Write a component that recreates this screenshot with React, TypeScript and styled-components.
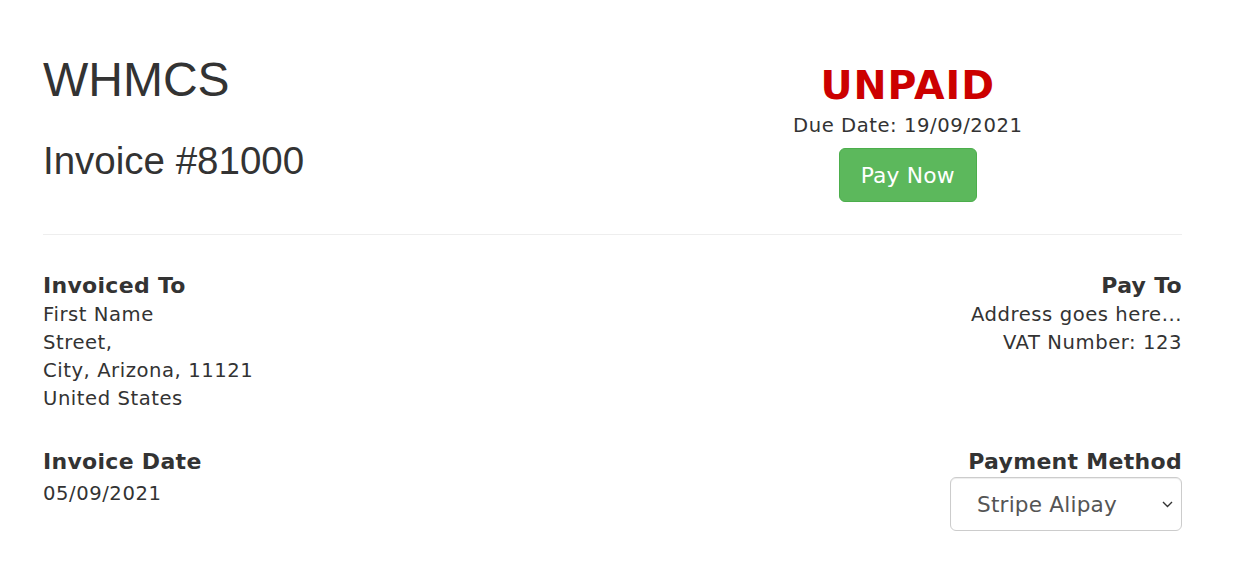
import styled, { createGlobalStyle } from 'styled-components';

const GlobalStyle = createGlobalStyle`
  html, body {
    margin: 0;
    padding: 0;
    background: #ffffff;
  }

  body {
    font-family: 'DejaVu Sans', Verdana, sans-serif;
    font-size: 19.6px;
    line-height: 28px;
    letter-spacing: 0.55px;
    color: #333333;
  }
`;

const Page = styled.div`
  padding: 54px 75px 0 43px;
`;

const Header = styled.header`
  display: grid;
  grid-template-columns: 1fr 1fr;
  column-gap: 42px;
  padding-bottom: 32px;
  border-bottom: 1px solid #eeeeee;
`;

const Brand = styled.h1`
  margin: 0;
  font-family: 'Liberation Sans', Arial, sans-serif;
  font-weight: 400;
  font-size: 48px;
  line-height: 52.8px;
  letter-spacing: 0;
`;

const InvoiceTitle = styled.h2`
  margin: 32px 0 0;
  font-family: 'Liberation Sans', Arial, sans-serif;
  font-weight: 400;
  font-size: 38.5px;
  line-height: 44px;
  letter-spacing: 0;
`;

const StatusColumn = styled.div`
  display: flex;
  flex-direction: column;
  align-items: center;
  padding-top: 9px;
`;

const Status = styled.div<{ $tone: 'unpaid' | 'paid' }>`
  font-weight: 700;
  font-size: 39.5px;
  line-height: 44px;
  letter-spacing: 1px;
  color: ${({ $tone }) => ($tone === 'unpaid' ? '#cc0000' : '#779500')};
`;

const DueDate = styled.div`
  margin-top: 5px;
`;

const PayButton = styled.button`
  margin-top: 8px;
  height: 54px;
  padding: 0 21px;
  font-family: 'DejaVu Sans', Verdana, sans-serif;
  font-size: 21.8px;
  letter-spacing: 0.2px;
  color: #ffffff;
  background: #5cb85c;
  border: 1px solid #4cae4c;
  border-radius: 6px;
  cursor: pointer;
`;

const DetailsRow = styled.section<{ $top: number }>`
  display: grid;
  grid-template-columns: 1fr 1fr;
  column-gap: 42px;
  margin-top: ${({ $top }) => $top}px;
`;

const Block = styled.div<{ $align?: 'left' | 'right' }>`
  display: flex;
  flex-direction: column;
  align-items: ${({ $align }) => ($align === 'right' ? 'flex-end' : 'flex-start')};
  text-align: ${({ $align }) => $align ?? 'left'};
`;

const Label = styled.strong`
  display: block;
  font-size: 22px;
  line-height: 30px;
  letter-spacing: 0.3px;
`;

const Line = styled.span<{ $gap?: number }>`
  display: block;
  margin-top: ${({ $gap }) => $gap ?? 0}px;
`;

const SelectWrap = styled.div`
  position: relative;
`;

const MethodSelect = styled.select`
  appearance: none;
  width: 232px;
  height: 54px;
  padding: 0 36px 0 26px;
  font-family: 'DejaVu Sans', Verdana, sans-serif;
  font-size: 21.6px;
  letter-spacing: 0.2px;
  color: #555555;
  background: #ffffff;
  border: 1px solid #cccccc;
  border-radius: 6px;
  box-shadow: inset 0 1px 1px rgba(0, 0, 0, 0.075);
`;

const Chevron = styled.svg`
  position: absolute;
  right: 9px;
  top: 24px;
  width: 11px;
  height: 7px;
  pointer-events: none;
`;

export default function App() {
  return (
    <>
      <GlobalStyle />
      <Page>
        <Header>
          <div>
            <Brand>WHMCS</Brand>
            <InvoiceTitle>Invoice #81000</InvoiceTitle>
          </div>
          <StatusColumn>
            <Status $tone="unpaid">UNPAID</Status>
            <DueDate>Due Date: 19/09/2021</DueDate>
            <PayButton type="button">Pay Now</PayButton>
          </StatusColumn>
        </Header>

        <DetailsRow $top={36}>
          <Block>
            <Label>Invoiced To</Label>
            <Line>First Name</Line>
            <Line>Street,</Line>
            <Line>City, Arizona, 11121</Line>
            <Line>United States</Line>
          </Block>
          <Block $align="right">
            <Label>Pay To</Label>
            <Line>Address goes here...</Line>
            <Line>VAT Number: 123</Line>
          </Block>
        </DetailsRow>

        <DetailsRow $top={34}>
          <Block>
            <Label>Invoice Date</Label>
            <Line $gap={3}>05/09/2021</Line>
          </Block>
          <Block $align="right">
            <Label>Payment Method</Label>
            <SelectWrap>
              <MethodSelect defaultValue="alipay">
                <option value="alipay">Stripe Alipay</option>
                <option value="card">Credit Card</option>
              </MethodSelect>
              <Chevron viewBox="0 0 11 7" aria-hidden="true">
                <path d="M1 1l4.5 4.5L10 1" fill="none" stroke="#333" strokeWidth="1.4" />
              </Chevron>
            </SelectWrap>
          </Block>
        </DetailsRow>
      </Page>
    </>
  );
}
